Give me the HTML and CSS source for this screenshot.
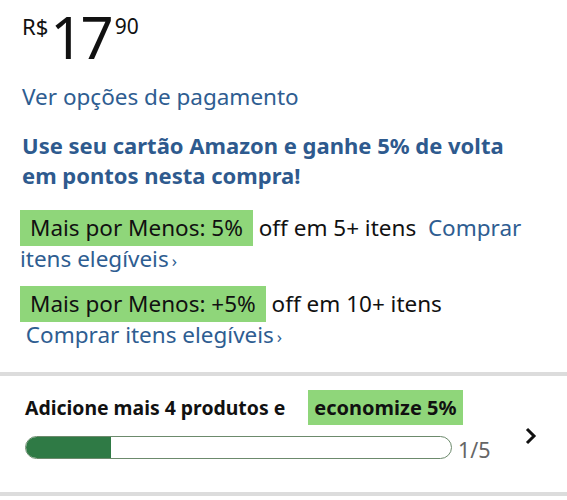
FILE: index.html
```html
<!DOCTYPE html>
<html lang="pt-BR">
<head>
<meta charset="utf-8">
<link rel="stylesheet" href="styles.css">
</head>
<body>
<div class="top">
  <div class="price">
    <span class="cur">R$</span><span class="whole">17</span><span class="frac">90</span>
  </div>
  <a class="link pay">Ver opções de pagamento</a>
  <p class="promo">Use seu cartão Amazon e ganhe 5% de volta em pontos nesta compra!</p>
  <p class="deal"><span class="hl">Mais por Menos: 5%</span> off em 5+ itens &nbsp;<a class="link">Comprar itens elegíveis<span class="chev">›</span></a></p>
  <p class="deal"><span class="hl">Mais por Menos: +5%</span> off em 10+ itens <a class="link">&nbsp;Comprar itens elegíveis<span class="chev">›</span></a></p>
</div>
<div class="band"></div>
<div class="progress-row">
  <div class="progress-main">
    <div class="ptitle">Adicione mais 4 produtos e <span class="hl">economize 5%</span></div>
    <div class="bar-line">
      <div class="bar"><div class="fill" style="width:20%"></div></div>
      <span class="count">1/5</span>
    </div>
  </div>
  <svg class="arrow" width="14" height="18" viewBox="0 0 14 18"><path d="M3 2 L10 9 L3 16" fill="none" stroke="#111" stroke-width="3"/></svg>
</div>
<div class="band last"></div>
</body>
</html>
```
FILE: styles.css
```css
html, body { margin: 0; padding: 0; background: #fff; }
body { font-family: "Noto Sans", "Open Sans", sans-serif; color: #111; width: 567px; }
.top { padding: 0 22px 0 22px; }
.price { display: flex; align-items: flex-start; height: 78px; }
.cur { font-size: 22px; line-height: 22px; margin-top: 15px; }
.whole { font-size: 58px; line-height: 66px; margin-top: 4px; margin-left: 2px; letter-spacing: -3px; }
.frac { font-size: 21px; line-height: 22px; margin-top: 15px; margin-left: 4px; }
.link { color: #2e5d91; text-decoration: none; }
.pay { display: block; font-size: 22.5px; line-height: 30px; margin-top: 4px; }
.promo { margin: 18px 0 0 0; font-size: 22px; line-height: 30px; font-weight: bold; color: #2e5a8e; max-width: 505px; }
.deal { margin: 22px 0 0 -2px; font-size: 22.5px; line-height: 31px; }
.deal + .deal { margin-top: 12px; }
.hl { background: #8fd67a; padding: 2px 10px 3px 10px; }
.chev { font-size: 17px; margin-left: 3px; }
.band { height: 4px; background: #dcdcdc; margin-top: 20px; }
.progress-row { display: flex; align-items: center; padding: 16px 29px 28px 25px; }
.progress-main { flex: 1; }
.ptitle { font-size: 19.4px; font-weight: bold; line-height: 32px; }
.ptitle .hl { padding: 4px 6px; margin-left: 18px; font-size: 20px; }
.bar-line { display: flex; align-items: center; margin-top: 7px; }
.bar { width: 425px; height: 21px; border: 1px solid #6c8a6c; border-radius: 12px; overflow: hidden; flex: none; }
.fill { height: 100%; background: #2f7a45; }
.count { font-size: 21.5px; color: #666; margin-left: 6px; margin-top: 4px; }
.arrow { margin-left: 30px; margin-top: 16px; }
.band.last { margin-top: 0; }
```
